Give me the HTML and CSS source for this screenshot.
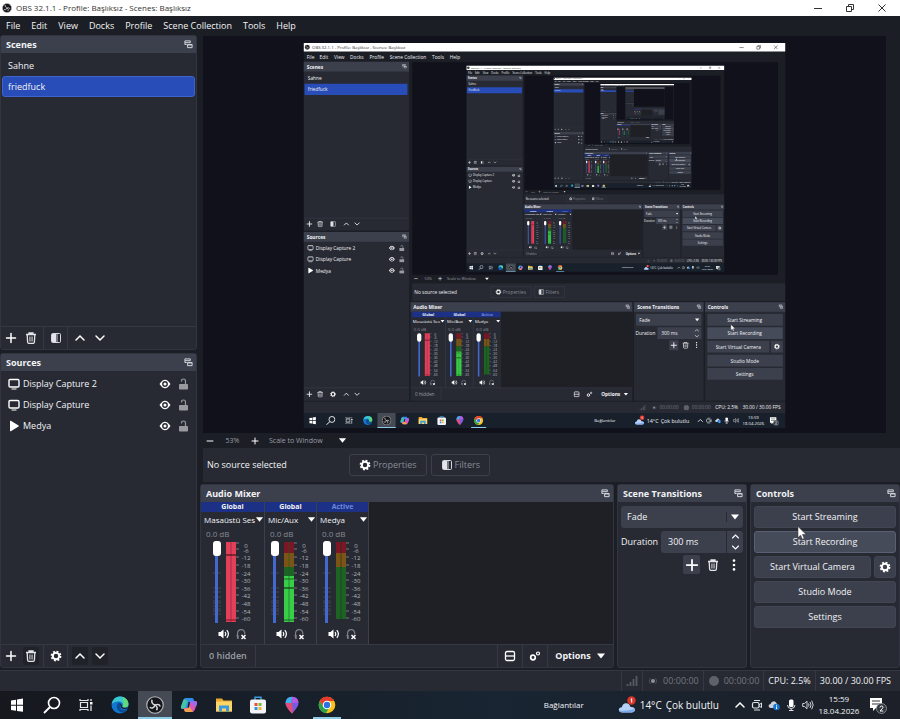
FILE: index.html
```html
<!DOCTYPE html>
<html lang="tr">
  <head>
    <meta charset="UTF-8" />
    <meta name="viewport" content="width=device-width, initial-scale=1.0" />
    <title>OBS 32.1.1</title>
    <link rel="stylesheet" href="styles.css">
  </head>
  <body>
    <!-- icons -->
    <svg class="sprite" aria-hidden="true">
      <symbol id="i-obs" viewBox="0 0 24 24"><circle cx="12" cy="12" r="11" fill="#16171b" stroke="#b9bbc0" stroke-width="1.5"/><g fill="none" stroke="#d4d6da" stroke-width="2"><path d="M8 5c-1 4 1 6 4 7 3-1 6-1 7 2"/><path d="M12 12c-1 4-4 5-7 3"/><path d="M12 12c3 2 4 4 2 7"/></g></symbol>
      <symbol id="i-float" viewBox="0 0 10 10"><path d="M1 1h6v2H1zM1 3v2h2M4 5h5v3.500H4zM4 5.500h5" fill="none" stroke="#d5d7dd" stroke-width="1.100"/></symbol>
      <symbol id="i-plus" viewBox="0 0 12 12"><path d="M6 1.500v9M1.500 6h9" stroke="#fff" stroke-width="1.500" stroke-linecap="round"/></symbol>
      <symbol id="i-minus" viewBox="0 0 12 12"><path d="M1 6h10" stroke="#d5d7dd" stroke-width="1.800"/></symbol>
      <symbol id="i-trash" viewBox="0 0 12 12"><path d="M1 2.500h10M4 2.200V1h4v1.200M2.200 2.700l.4 7.300q.1 1.300 1.200 1.300h4.400q1.100 0 1.200-1.300l.4-7.300" fill="none" stroke="#e4e5e9" stroke-width="1.300"/><path d="M4.700 4.500v5M6 4.500v5M7.300 4.500v5" stroke="#e4e5e9" stroke-width=".7"/></symbol>
      <symbol id="i-filter" viewBox="0 0 12 12"><rect x="1.500" y="1.500" width="9" height="9" rx="1" fill="none" stroke="#d5d7dd" stroke-width="1"/><path d="M2 2h4v8H2z" fill="#e4e5e9"/><path d="M6 2h2v8H6z" fill="#777b86"/></symbol>
      <symbol id="i-up" viewBox="0 0 12 12"><path d="M2 8l4-4 4 4" fill="none" stroke="#fff" stroke-width="1.500" stroke-linecap="round"/></symbol>
      <symbol id="i-down" viewBox="0 0 12 12"><path d="M2 4l4 4 4-4" fill="none" stroke="#fff" stroke-width="1.500" stroke-linecap="round"/></symbol>
      <symbol id="i-arrow" viewBox="0 0 10 10"><path d="M1 2.500h8L5 7.500z" fill="#fff"/></symbol>
      <symbol id="i-gear" viewBox="0 0 12 12"><circle cx="6" cy="6" r="3.200" fill="none" stroke="#fff" stroke-width="2"/><circle cx="6" cy="6" r="4.600" fill="none" stroke="#fff" stroke-width="1.600" stroke-dasharray="1.900 1.713"/></symbol>
      <symbol id="i-gears" viewBox="0 0 12 12"><circle cx="4" cy="7.500" r="2.300" fill="none" stroke="#fff" stroke-width="1.700"/><circle cx="9" cy="3.500" r="1.500" fill="none" stroke="#fff" stroke-width="1.200"/></symbol>
      <symbol id="i-layout" viewBox="0 0 12 12"><rect x="1.500" y="1.500" width="9" height="9" rx="1.500" fill="none" stroke="#fff" stroke-width="1.300"/><path d="M1.500 6h9" stroke="#fff" stroke-width="1.300"/></symbol>
      <symbol id="i-dots" viewBox="0 0 12 12"><g fill="#fff"><circle cx="6" cy="1.600" r="1.300"/><circle cx="6" cy="6" r="1.300"/><circle cx="6" cy="10.400" r="1.300"/></g></symbol>
      <symbol id="i-monitor" viewBox="0 0 12 12"><rect x="1" y="1.500" width="10" height="7.500" rx="1.200" fill="none" stroke="#fff" stroke-width="1.400"/><path d="M3.500 11h5" stroke="#fff" stroke-width="1"/></symbol>
      <symbol id="i-play" viewBox="0 0 12 12"><path d="M2 1.200q0-.8.800-.4l7.800 4.700q.6.500 0 1l-7.800 4.700q-.8.300-.8-.4z" fill="#fff"/></symbol>
      <symbol id="i-eye" viewBox="0 0 12 12"><path d="M.5 6Q6-2.500 11.500 6 6 14.500.5 6z" fill="#fff"/><circle cx="6" cy="6" r="2.900" fill="#272a33"/><circle cx="6" cy="6" r="1.500" fill="#fff"/></symbol>
      <symbol id="i-lock" viewBox="0 0 12 12"><rect x="2" y="6" width="9" height="5.500" rx=".8" fill="#989a9f"/><path d="M4.500 3.500V3q0-2 2-2t2 2v3" fill="none" stroke="#989a9f" stroke-width="1.200"/></symbol>
      <symbol id="i-speaker" viewBox="0 0 12 12"><path d="M.5 4h2l3-2.500v9L2.500 8h-2z" fill="#fff"/><path d="M7 4q1.500 2 0 4M8.800 2.200q3.200 3.800 0 7.600" fill="none" stroke="#fff" stroke-width="1.200"/></symbol>
      <symbol id="i-phones" viewBox="0 0 12 12"><path d="M2.500 10.500V6q0-4.300 3.700-4.300T9.800 6" fill="none" stroke="#7e8188" stroke-width="1.200"/><path d="M1.500 7h2.200v4H2.500z" fill="#7e8188"/><path d="M6.500 7l4 4M10.500 7l-4 4" stroke="#fff" stroke-width="1.500"/></symbol>
      <symbol id="i-signal" viewBox="0 0 12 12"><path d="M1.500 11V9M4.500 11V7M7.500 11V4M10.500 11V1" stroke="#575a63" stroke-width="1.800"/></symbol>
      <symbol id="i-live" viewBox="0 0 12 12"><circle cx="6" cy="6" r="2" fill="#8d9098"/><path d="M3.500 3q-2.500 3 0 6M8.500 3q2.500 3 0 6" fill="none" stroke="#4a4d56"/></symbol>
      <symbol id="i-rec" viewBox="0 0 12 12"><circle cx="6" cy="6" r="5" fill="#5f6168"/></symbol>
      <symbol id="i-min" viewBox="0 0 10 10"><path d="M1 5.500h8" stroke="#333"/></symbol>
      <symbol id="i-max" viewBox="0 0 10 10"><path d="M1.500 3.500h5v5h-5zM3.500 3V1.500h5v5H7" fill="none" stroke="#333"/></symbol>
      <symbol id="i-close" viewBox="0 0 10 10"><path d="M1.500 1.500l7 7M8.500 1.500l-7 7" stroke="#333"/></symbol>
      <symbol id="i-cursor" viewBox="0 0 10 14"><path d="M1 .5v11l2.600-2.300 1.800 4 1.800-.8-1.800-3.900H9z" fill="#fff" stroke="#333" stroke-width=".5"/></symbol>

      <!-- taskbar icons -->
      <symbol id="t-win" viewBox="0 0 18 18"><path d="M3 4.500l5-.8v5H3zM9 3.500l6-.9v6.100H9zM3 9.700h5v5l-5-.8zM9 9.700h6v6.100l-6-.9z" fill="#fff"/></symbol>
      <symbol id="t-search" viewBox="0 0 18 18"><circle cx="11" cy="7" r="5.500" fill="none" stroke="#fff" stroke-width="1.600"/><path d="M7 11l-6 6" stroke="#fff" stroke-width="1.800"/></symbol>
      <symbol id="t-view" viewBox="0 0 18 18"><path d="M3.500 6.500h7v5h-7zM3 3v1.500h8V3M3 15v-1.500h8V15" fill="none" stroke="#e4e5e9" stroke-width="1.200"/><path d="M14 3v2M14 9.500V15" stroke="#e4e5e9" stroke-width="1.300"/><path d="M13 6h2.500v2.500H13z" fill="#fff"/></symbol>
      <symbol id="t-edge" viewBox="0 0 18 18"><circle cx="9" cy="9" r="8.500" fill="#1377cf"/><path d="M.8 8C2-2.500 17-1.500 17.400 8c.1 3-3 4.200-6 3.200 1.600-4-1-5.700-4-5.600C4 5.700 2 6.500.8 8z" fill="#3bc7cf"/><path d="M12 1.200c4 1.500 5.400 4 5.400 6.800 0 3-3 4.200-6 3.200 2-4 .6-7 .6-10z" fill="#62d879"/><path d="M7 7c-3 4-.5 9 5 9.800 2-.5 4-2.300 4.500-3.800-4 2-7.500.4-7.500-2.500 0-1 1-1.500 1-2.500S8 6.500 7 7z" fill="#0d4d97"/><path d="M9.300 8.500q1.700.8.900 2.300 2 2.700 6.700 1" fill="none" stroke="#171c26" stroke-width="1.200"/></symbol>
      <symbol id="t-copilot" viewBox="0 0 18 18"><path d="M6 2h6q1.300 0 1.600 1.300L14.500 6H9.800L7.500 13H3q-2.500 0-2-2.500L3.300 4Q4 2 6 2z" fill="#2f8fe8"/><path d="M3.300 4L1 10.500Q.5 13 3 13h2L7.500 5q-3-3-4.200-1z" fill="#46c3a0"/><path d="M12 16H6q-1.300 0-1.600-1.300L3.500 12h4.700l2.300-7H15q2.500 0 2 2.500L14.700 14Q14 16 12 16z" fill="#d958b5"/><path d="M4 13l4.200-1L9 10l4 6H6q-1.300 0-2-3z" fill="#f3a24b"/><path d="M10.500 5H15q2.500 0 2 2.500L16 11l-6-4z" fill="#9a6bea"/><path d="M8.500 6h1.300L9 11.500H7.500z" fill="#171c26"/></symbol>
      <symbol id="t-folder" viewBox="0 0 18 18"><path d="M1 2.500h6l1.500 2H17v11H1z" fill="#e9a92f"/><path d="M1 5.500h16v10H1z" fill="#fdd567"/><path d="M4 9.500h10v6h-3v-3H7v3H4z" fill="#3a9ade"/></symbol>
      <symbol id="t-store" viewBox="0 0 18 18"><path d="M6 4V1.200h6V4" fill="none" stroke="#3a9ade" stroke-width="1.500"/><rect x="1" y="3.500" width="16" height="14" rx="2" fill="#f3f4f7"/><path d="M5.500 7H8.500v3H5.500z" fill="#e9533b"/><path d="M9.500 7h3v3h-3z" fill="#7cba3b"/><path d="M5.500 11h3v3h-3z" fill="#2f94de"/><path d="M9.500 11h3v3h-3z" fill="#f2b52c"/></symbol>
      <symbol id="t-paint" viewBox="0 0 18 18"><path d="M9 17.500Q2 10.500 2.500 6.500 3 1 9 .7q6 .3 6.500 5.800Q16 10.500 9 17.500z" fill="#7a5be0"/><path d="M2.500 7Q3 1 9 .7L8 8z" fill="#38b6ea"/><path d="M9 .7q6 .3 6.500 5.800L9 7z" fill="#b45be0"/><path d="M2.500 7L9 7l1 9.500-1 1Q3 11.500 2.500 7z" fill="#e04d75"/></symbol>
      <symbol id="t-chrome" viewBox="0 0 18 18"><circle cx="9" cy="9" r="8.300" fill="#fbc116"/><path d="M1.800 4.800a8.300 8.300 0 0 0 6.200 12.400l3.600-6.200H5.400z" fill="#2da24c"/><path d="M1.800 4.800A8.300 8.300 0 0 1 16.200 4.900H9L5.400 11z" fill="#e33b2e"/><circle cx="9" cy="9" r="4.300" fill="#fff"/><circle cx="9" cy="9" r="3.200" fill="#2b73e2"/></symbol>
      <symbol id="t-weather" viewBox="0 0 18 18"><path d="M4.500 16.500q-3.500 0-3.700-2.700.2-2.500 3-2.600 1-4.200 4.500-4 3.200.2 4.200 3.700 4.500-.2 4.500 2.900-.2 2.700-3.500 2.700z" fill="#b6d1f7"/><path d="M1 14.500q7 1 15.500-1.500.3 3.500-3.500 3.500H4.500Q1.500 16.500 1 14.500z" fill="#7ca8ec"/><circle cx="13.500" cy="4.500" r="4.200" fill="#d9362b"/><path d="M12.700 3.500l1-.8v4" fill="none" stroke="#fff"/></symbol>
      <symbol id="t-meet" viewBox="0 0 12 12"><rect x="1.500" y="3.500" width="6.500" height="5.500" rx="1.500" fill="none" stroke="#dfe1e5" stroke-width="1.200"/><path d="M8 6l2.500-2v4.500L8 7M3 1.500h6M3 11h6" fill="none" stroke="#dfe1e5"/></symbol>
      <symbol id="t-cloud" viewBox="0 0 12 12"><path d="M2.500 9Q.3 8.500.6 6.500 1 5 2.500 5 3.500 2 6 2.200 8 2.500 8.700 4.500L10 6l-4 3z" fill="#cdd1d8"/><circle cx="8.500" cy="8" r="3.300" fill="#1673d1"/><path d="M8.500 7.500V10M8.500 5.800v1" stroke="#fff"/></symbol>
      <symbol id="t-mic" viewBox="0 0 12 12"><rect x="4" y=".5" width="4.500" height="7.500" rx="1.500" fill="#fff"/><path d="M2.500 6q0 3.500 3.700 3.500T10 6M6.200 9.500v2M4 11.500h4.500" fill="none" stroke="#dfe1e5"/></symbol>
      <symbol id="t-vol" viewBox="0 0 12 12"><path d="M.7 4.500h1.800L5 2.200v7.600L2.500 7.500H.7zM6.500 4.500q1 1.500 0 3M8 3q2 3 0 6M9.700 1.700q3 4.300 0 8.600" fill="none" stroke="#dfe1e5" stroke-width=".9"/></symbol>
      <symbol id="t-note" viewBox="0 0 18 18"><path d="M1 2h12v10H7l-3 3v-3H1z" fill="#fff"/><path d="M3 5h8M3 8h8" stroke="#30343d"/><circle cx="12.500" cy="12.500" r="5" fill="#30343d" stroke="#9a9da4" stroke-width=".8"/><path d="M11 11.500q0-1.500 1.500-1.500t1.500 1.300q0 .8-3 3.700h3.300" fill="none" stroke="#fff"/></symbol>

      <!-- level meters -->
      <symbol id="m-scale" viewBox="0 0 28 82">
        <path d="M10 2h3M10 8h3M10 16h3M10 24h3M10 32h3M10 39h3M10 47h3M10 54h3M10 62h3M10 70h3M10 77h3" stroke="#767982"/>
        <g class="scale-text"><text x="20" y="7">0</text><text x="20" y="12">-6</text><text x="20" y="19">-12</text><text x="20" y="27">-18</text><text x="20" y="35">-24</text><text x="20" y="42">-30</text><text x="20" y="50">-36</text><text x="20" y="57">-42</text><text x="20" y="65">-48</text><text x="20" y="73">-54</text><text x="20" y="80">-60</text></g>
      </symbol>
      <symbol id="m-clip" viewBox="0 0 28 82"><path d="M0 1h10v80H0z" fill="#e2405a"/><path d="M5 1v80" stroke="#a82c42"/><path d="M0 14h10" stroke="#25070c"/><path d="M0 79h10" stroke="#7d1524"/><use href="#m-scale"/></symbol>
      <symbol id="m-live" viewBox="0 0 28 82"><path d="M0 1h10v11H0z" fill="#7d1524"/><path d="M0 12h10v14H0z" fill="#7c5416"/><path d="M0 26h10v9H0z" fill="#1d6424"/><path d="M0 35h10v46H0z" fill="#38cf48"/><path d="M5 1v80" stroke="#1c5a26" stroke-opacity=".6"/><path d="M0 38h10M0 79h10" stroke="#1d6424"/><path d="M0 47h10" stroke="#08180a"/><use href="#m-scale"/></symbol>
      <symbol id="m-idle" viewBox="0 0 28 82"><path d="M0 1h10v11H0z" fill="#7d1524"/><path d="M0 12h10v14H0z" fill="#7c5416"/><path d="M0 26h10v52H0z" fill="#1d6424"/><path d="M5 1v77" stroke="#15331a" stroke-opacity=".6"/><use href="#m-scale"/></symbol>
      <symbol id="m-ticks" viewBox="0 0 10 82"><path d="M1 32h8M1 47h8M1 51h8M1 56h8M1 60h8M1 62h8M1 65h8M1 68h8M1 70h8M1 73h8" stroke="#51545e" stroke-width=".7"/></symbol>

      <!-- one captured desktop, repeated inside itself -->
      <symbol id="desk" viewBox="0 0 900 719">
        <path d="M0 0h900v719H0z" fill="#1c1e25"/>
        <path d="M0 0h900v16H0z" fill="#fff"/>
        <use href="#i-obs" x="2" y="3" width="10" height="10"/>
        <text x="16" y="11" font-size="8" fill="#333">OBS 32.1.1 - Profile: Başlıksız - Scenes: Başlıksız</text>
        <use href="#i-min" x="813" y="3" width="10" height="10"/><use href="#i-max" x="845" y="3" width="10" height="10"/><use href="#i-close" x="877" y="3" width="10" height="10"/>
        <text x="6" y="29">File</text><text x="30" y="29">Edit</text><text x="57" y="29">View</text><text x="87" y="29">Docks</text><text x="123" y="29">Profile</text><text x="161" y="29">Scene Collection</text><text x="240" y="29">Tools</text><text x="273" y="29">Help</text>
        <path d="M0 35h197v315H0zM0 353h197v315H0zM203 449h697v33H203zM200 484h414v184H200zM617 484h130v184H617zM750 484h150v184H750zM0 670h900v21H0z" fill="#272a33"/>
        <path d="M0 35h197v18H0zM0 353h197v18H0zM200 484h414v18H200zM617 484h130v18H617zM750 484h150v18H750z" fill="#3c404d"/>
        <path d="M203 36h683v397H203z" fill="#10111a"/>
        <path d="M369 502h244v142H369z" fill="#1f2026"/>
        <path d="M0 327h197M0 644h197M200 644h414M265 502v142M317 502v142M257 644v23" stroke="#3c404d"/>
        <path d="M2 76h192v21H2z" fill="#284cb8"/>
        <g font-weight="700"><text x="6" y="48">Scenes</text><text x="6" y="366">Sources</text><text x="205" y="496">Audio Mixer</text><text x="623" y="496">Scene Transitions</text><text x="755" y="496">Controls</text></g>
        <use href="#i-float" x="184" y="39" width="9" height="9"/><use href="#i-float" x="184" y="357" width="9" height="9"/><use href="#i-float" x="601" y="488" width="9" height="9"/><use href="#i-float" x="734" y="488" width="9" height="9"/><use href="#i-float" x="887" y="488" width="9" height="9"/>
        <text x="8" y="69">Sahne</text><text x="8" y="90">friedfuck</text>
        <use href="#i-plus" x="5" y="332" width="12" height="12"/><use href="#i-trash" x="25" y="332" width="12" height="12"/><use href="#i-filter" x="49" y="332" width="12" height="12"/><use href="#i-up" x="74" y="332" width="12" height="12"/><use href="#i-down" x="94" y="332" width="12" height="12"/>
        <use href="#i-plus" x="5" y="650" width="12" height="12"/><use href="#i-trash" x="25" y="650" width="12" height="12"/><use href="#i-gear" x="49" y="650" width="12" height="12"/><use href="#i-up" x="74" y="650" width="12" height="12"/><use href="#i-down" x="94" y="650" width="12" height="12"/>
        <use href="#i-monitor" x="7" y="377" width="12" height="12"/><use href="#i-monitor" x="7" y="398" width="12" height="12"/><use href="#i-play" x="7" y="419" width="12" height="12"/>
        <text x="23" y="387">Display Capture 2</text><text x="23" y="408">Display Capture</text><text x="23" y="429">Medya</text>
        <use href="#i-eye" x="159" y="377" width="12" height="12"/><use href="#i-eye" x="159" y="398" width="12" height="12"/><use href="#i-eye" x="159" y="419" width="12" height="12"/>
        <use href="#i-lock" x="177" y="377" width="12" height="12"/><use href="#i-lock" x="177" y="398" width="12" height="12"/><use href="#i-lock" x="177" y="419" width="12" height="12"/>
        <use href="#i-minus" x="206" y="436" width="8" height="8"/><use href="#i-plus" x="251" y="436" width="8" height="8"/>
        <g font-size="7" fill="#9a9da5"><text x="226" y="443">53%</text><text x="268" y="443">Scale to Window</text></g>
        <use href="#i-arrow" x="338" y="436" width="9" height="9"/>
        <text x="207" y="469">No source selected</text>
        <path d="M350 455h75v20h-75zM431 455h56v20h-56z" fill="none" stroke="#3c404d"/>
        <use href="#i-gear" x="358" y="459" width="12" height="12"/><use href="#i-filter" x="438" y="459" width="12" height="12"/>
        <g fill="#888b94"><text x="372" y="469">Properties</text><text x="452" y="469">Filters</text></g>
        <path d="M202 502h166v10H202z" fill="#1c3185"/>
        <g font-size="7" font-weight="700" text-anchor="middle"><text x="233" y="510">Global</text><text x="291" y="510">Global</text><text x="343" y="510" fill="#6d88dd">Active</text></g>
        <g font-size="8"><text x="204" y="523">Masaüstü Ses</text><text x="268" y="523">Mic/Aux</text><text x="320" y="523">Medya</text></g>
        <use href="#i-arrow" x="255" y="515" width="9" height="9"/><use href="#i-arrow" x="307" y="515" width="9" height="9"/><use href="#i-arrow" x="359" y="515" width="9" height="9"/>
        <g font-size="8" fill="#888b94"><text x="206" y="537">0.0 dB</text><text x="270" y="537">0.0 dB</text><text x="322" y="537">0.0 dB</text></g>
        <path d="M216 545v78M275 545v78M327 545v78" stroke="#4269cf" stroke-width="3"/>
        <path d="M216 546v8M275 546v8M327 546v8" stroke="#fff" stroke-width="8" stroke-linecap="round"/>
        <use href="#m-clip" x="226" y="541" width="28" height="82"/><use href="#m-live" x="285" y="541" width="28" height="82"/><use href="#m-idle" x="337" y="541" width="28" height="82"/>
        <use href="#i-speaker" x="218" y="628" width="12" height="12"/><use href="#i-phones" x="235" y="628" width="12" height="12"/><use href="#i-speaker" x="276" y="628" width="12" height="12"/><use href="#i-phones" x="293" y="628" width="12" height="12"/><use href="#i-speaker" x="328" y="628" width="12" height="12"/><use href="#i-phones" x="345" y="628" width="12" height="12"/>
        <text x="208" y="660" fill="#9a9da5">0 hidden</text>
        <use href="#i-layout" x="504" y="650" width="12" height="12"/><use href="#i-gears" x="528" y="650" width="12" height="12"/><text x="556" y="660" font-weight="700">Options</text><use href="#i-arrow" x="597" y="651" width="10" height="10"/>
        <path d="M621 506h122v22H621zM661 531h82v22h-82zM683 555h17v19h-17zM754 506h141v22H754zM754 556h116v22H754zM873 556h22v22h-22zM754 582h141v22H754zM754 607h141v22H754z" fill="#3c404d"/>
        <path d="M754 531h141v22H754z" fill="#464b5a"/>
        <text x="627" y="521">Fade</text><text x="620" y="546">Duration</text><text x="668" y="546">300 ms</text>
        <use href="#i-arrow" x="730" y="512" width="10" height="10"/><use href="#i-up" x="730" y="532" width="9" height="9"/><use href="#i-down" x="730" y="543" width="9" height="9"/>
        <use href="#i-plus" x="685" y="558" width="13" height="13"/><use href="#i-trash" x="707" y="558" width="13" height="13"/><use href="#i-dots" x="728" y="558" width="12" height="12"/>
        <g text-anchor="middle"><text x="824" y="521">Start Streaming</text><text x="824" y="546">Start Recording</text><text x="812" y="571">Start Virtual Camera</text><text x="824" y="597">Studio Mode</text><text x="824" y="622">Settings</text></g>
        <use href="#i-gear" x="878" y="561" width="12" height="12"/><use href="#i-cursor" x="797" y="525" width="10" height="14"/>
        <use href="#i-signal" x="627" y="675" width="12" height="12"/><use href="#i-live" x="649" y="675" width="12" height="12"/><use href="#i-rec" x="709" y="675" width="12" height="12"/>
        <text x="665" y="684" fill="#74777f">00:00:00</text><text x="725" y="684" fill="#74777f">00:00:00</text><text x="769" y="684">CPU: 2.5%</text><text x="820" y="684">30.00 / 30.00 FPS</text>
        <path d="M0 691h900v28H0z" fill="#18202b"/>
        <path d="M138 691h34v28h-34z" fill="#464a54"/><path d="M138 717h34v2h-34zM313 717h28v2h-28z" fill="#8ccbe8"/>
        <use href="#t-win" x="8" y="696" width="18" height="18"/><use href="#t-search" x="42" y="696" width="18" height="18"/><use href="#t-view" x="76" y="696" width="18" height="18"/><use href="#t-edge" x="111" y="696" width="18" height="18"/><use href="#i-obs" x="146" y="696" width="18" height="18"/><use href="#t-copilot" x="180" y="696" width="18" height="18"/><use href="#t-folder" x="214" y="696" width="18" height="18"/><use href="#t-store" x="249" y="696" width="18" height="18"/><use href="#t-paint" x="283" y="696" width="18" height="18"/><use href="#t-chrome" x="318" y="696" width="18" height="18"/>
        <text x="543" y="708" font-size="8">Bağlantılar</text>
        <use href="#t-weather" x="618" y="695" width="19" height="19"/><g font-size="10"><text x="641" y="709">14°C</text><text x="667" y="709">Çok bulutlu</text></g>
        <use href="#i-up" x="735" y="699" width="12" height="12"/><use href="#t-meet" x="751" y="699" width="12" height="12"/><use href="#t-cloud" x="768" y="699" width="12" height="12"/><use href="#t-mic" x="784" y="699" width="12" height="12"/><use href="#t-vol" x="802" y="699" width="12" height="12"/>
        <g font-size="8" text-anchor="middle"><text x="840" y="702">13:59</text><text x="840" y="714">18.04.2026</text></g>
        <use href="#t-note" x="870" y="697" width="18" height="18"/>
      </symbol>
      <symbol id="desk5" viewBox="0 0 900 719"><use href="#desk" width="900" height="719"/></symbol>
      <symbol id="desk4" viewBox="0 0 900 719"><use href="#desk" width="900" height="719"/><use href="#desk5" x="304" y="42" width="482" height="385"/></symbol>
      <symbol id="desk3" viewBox="0 0 900 719"><use href="#desk" width="900" height="719"/><use href="#desk4" x="304" y="42" width="482" height="385"/></symbol>
      <symbol id="desk2" viewBox="0 0 900 719"><use href="#desk" width="900" height="719"/><use href="#desk3" x="304" y="42" width="482" height="385"/></symbol>
    </svg>

    <header class="titlebar">
      <svg class="logo"><use href="#i-obs"/></svg>
      <span class="title">OBS 32.1.1 - Profile: Başlıksız - Scenes: Başlıksız</span>
      <button aria-label="Minimize"><svg class="i10"><use href="#i-min"/></svg></button>
      <button aria-label="Restore"><svg class="i10"><use href="#i-max"/></svg></button>
      <button aria-label="Close"><svg class="i10"><use href="#i-close"/></svg></button>
    </header>
    <nav class="menubar">
      <button>File</button><button>Edit</button><button>View</button><button>Docks</button><button>Profile</button><button>Scene Collection</button><button>Tools</button><button>Help</button>
    </nav>

    <main class="workspace">
      <aside class="left">
        <section class="dock">
          <h2>Scenes <button aria-label="Float"><svg class="i9"><use href="#i-float"/></svg></button></h2>
          <ul class="list">
            <li>Sahne</li>
            <li class="selected">friedfuck</li>
          </ul>
          <div class="toolbar">
            <button aria-label="Add scene"><svg class="i12"><use href="#i-plus"/></svg></button>
            <button aria-label="Remove scene"><svg class="i12"><use href="#i-trash"/></svg></button>
            <button class="mid" aria-label="Scene filters"><svg class="i12"><use href="#i-filter"/></svg></button>
            <button aria-label="Move up"><svg class="i12"><use href="#i-up"/></svg></button>
            <button aria-label="Move down"><svg class="i12"><use href="#i-down"/></svg></button>
          </div>
        </section>
        <section class="dock">
          <h2>Sources <button aria-label="Float"><svg class="i9"><use href="#i-float"/></svg></button></h2>
          <ul class="list">
            <li><svg class="i12"><use href="#i-monitor"/></svg><span>Display Capture 2</span><button aria-label="Visible"><svg class="i12"><use href="#i-eye"/></svg></button><button aria-label="Lock"><svg class="i12"><use href="#i-lock"/></svg></button></li>
            <li><svg class="i12"><use href="#i-monitor"/></svg><span>Display Capture</span><button aria-label="Visible"><svg class="i12"><use href="#i-eye"/></svg></button><button aria-label="Lock"><svg class="i12"><use href="#i-lock"/></svg></button></li>
            <li><svg class="i12"><use href="#i-play"/></svg><span>Medya</span><button aria-label="Visible"><svg class="i12"><use href="#i-eye"/></svg></button><button aria-label="Lock"><svg class="i12"><use href="#i-lock"/></svg></button></li>
          </ul>
          <div class="toolbar">
            <button aria-label="Add source"><svg class="i12"><use href="#i-plus"/></svg></button>
            <button class="dark" aria-label="Remove source"><svg class="i12"><use href="#i-trash"/></svg></button>
            <button class="mid" aria-label="Source properties"><svg class="i12"><use href="#i-gear"/></svg></button>
            <button class="dark" aria-label="Move up"><svg class="i12"><use href="#i-up"/></svg></button>
            <button class="dark" aria-label="Move down"><svg class="i12"><use href="#i-down"/></svg></button>
          </div>
        </section>
      </aside>

      <div class="center">
        <div class="preview">
          <svg class="shot" viewBox="0 0 900 719" role="img" aria-label="Display Capture 2">
            <use href="#desk" width="900" height="719"/>
            <use href="#desk2" x="304" y="42" width="482" height="385"/>
          </svg>
        </div>
        <div class="zoombar">
          <button aria-label="Zoom out"><svg class="i8"><use href="#i-minus"/></svg></button>
          <span>53%</span>
          <button aria-label="Zoom in"><svg class="i8"><use href="#i-plus"/></svg></button>
          <div class="pick">
            <select aria-label="Preview scaling"><option>Scale to Window</option></select>
            <svg class="i9"><use href="#i-arrow"/></svg>
          </div>
        </div>
        <div class="context">
          <span>No source selected</span>
          <button><svg class="i12"><use href="#i-gear"/></svg>Properties</button>
          <button><svg class="i12"><use href="#i-filter"/></svg>Filters</button>
        </div>

        <div class="docks">
          <section class="dock mixer">
            <h2>Audio Mixer <button aria-label="Float"><svg class="i9"><use href="#i-float"/></svg></button></h2>
            <div class="channels">
              <div class="channel wide">
                <b>Global</b>
                <button class="name">Masaüstü Ses<svg class="i9"><use href="#i-arrow"/></svg></button>
                <span class="db">0.0 dB</span>
                <div class="levels">
                  <div class="fader"><svg><use href="#m-ticks"/></svg><input type="range" aria-label="Masaüstü Ses" value="100"></div>
                  <svg class="meter"><use href="#m-clip"/></svg>
                </div>
                <div class="mute"><button aria-label="Mute"><svg class="i12"><use href="#i-speaker"/></svg></button><button aria-label="Monitor"><svg class="i12"><use href="#i-phones"/></svg></button></div>
              </div>
              <div class="channel">
                <b>Global</b>
                <button class="name">Mic/Aux<svg class="i9"><use href="#i-arrow"/></svg></button>
                <span class="db">0.0 dB</span>
                <div class="levels">
                  <div class="fader"><svg><use href="#m-ticks"/></svg><input type="range" aria-label="Mic/Aux" value="100"></div>
                  <svg class="meter"><use href="#m-live"/></svg>
                </div>
                <div class="mute"><button aria-label="Mute"><svg class="i12"><use href="#i-speaker"/></svg></button><button aria-label="Monitor"><svg class="i12"><use href="#i-phones"/></svg></button></div>
              </div>
              <div class="channel active">
                <b>Active</b>
                <button class="name">Medya<svg class="i9"><use href="#i-arrow"/></svg></button>
                <span class="db">0.0 dB</span>
                <div class="levels">
                  <div class="fader"><svg><use href="#m-ticks"/></svg><input type="range" aria-label="Medya" value="100"></div>
                  <svg class="meter"><use href="#m-idle"/></svg>
                </div>
                <div class="mute"><button aria-label="Mute"><svg class="i12"><use href="#i-speaker"/></svg></button><button aria-label="Monitor"><svg class="i12"><use href="#i-phones"/></svg></button></div>
              </div>
            </div>
            <div class="toolbar">
              <button class="hidden-count">0 hidden</button>
              <button class="sep" aria-label="Layout"><svg class="i12"><use href="#i-layout"/></svg></button>
              <button class="sep" aria-label="Advanced audio"><svg class="i12"><use href="#i-gears"/></svg></button>
              <button class="sep options">Options<svg class="i10"><use href="#i-arrow"/></svg></button>
            </div>
          </section>

          <section class="dock transitions">
            <h2>Scene Transitions <button aria-label="Float"><svg class="i9"><use href="#i-float"/></svg></button></h2>
            <div class="pick">
              <select aria-label="Transition"><option>Fade</option></select>
              <svg class="i10"><use href="#i-arrow"/></svg>
            </div>
            <div class="duration">
              <label for="duration">Duration</label>
              <div class="spin">
                <input id="duration" type="text" value="300 ms">
                <div class="steps"><button aria-label="Increase"><svg class="i9"><use href="#i-up"/></svg></button><button aria-label="Decrease"><svg class="i9"><use href="#i-down"/></svg></button></div>
              </div>
            </div>
            <div class="actions">
              <button class="filled" aria-label="Add transition"><svg class="i14"><use href="#i-plus"/></svg></button>
              <button aria-label="Remove transition"><svg class="i12"><use href="#i-trash"/></svg></button>
              <button aria-label="Transition menu"><svg class="i12"><use href="#i-dots"/></svg></button>
            </div>
          </section>

          <section class="dock controls">
            <h2>Controls <button aria-label="Float"><svg class="i9"><use href="#i-float"/></svg></button></h2>
            <div class="stack">
              <button>Start Streaming</button>
              <button class="hover">Start Recording<svg class="cursor"><use href="#i-cursor"/></svg></button>
              <div class="row"><button>Start Virtual Camera</button><button class="square" aria-label="Virtual camera settings"><svg class="i12"><use href="#i-gear"/></svg></button></div>
              <button>Studio Mode</button>
              <button>Settings</button>
            </div>
          </section>
        </div>
      </div>
    </main>

    <footer class="status">
      <span><svg class="i12"><use href="#i-signal"/></svg></span>
      <span class="dim"><svg class="i12"><use href="#i-live"/></svg>00:00:00</span>
      <span class="dim"><svg class="i12"><use href="#i-rec"/></svg>00:00:00</span>
      <span>CPU: 2.5%</span>
      <span class="fps">30.00 / 30.00 FPS</span>
    </footer>

    <div class="taskbar">
      <div class="apps">
        <button aria-label="Start"><svg><use href="#t-win"/></svg></button>
        <button aria-label="Search"><svg><use href="#t-search"/></svg></button>
        <button aria-label="Task view"><svg><use href="#t-view"/></svg></button>
        <button aria-label="Edge"><svg><use href="#t-edge"/></svg></button>
        <button class="current" aria-label="OBS"><svg><use href="#i-obs"/></svg></button>
        <button aria-label="Copilot"><svg><use href="#t-copilot"/></svg></button>
        <button aria-label="Files"><svg><use href="#t-folder"/></svg></button>
        <button aria-label="Store"><svg><use href="#t-store"/></svg></button>
        <button aria-label="Paint"><svg><use href="#t-paint"/></svg></button>
        <button class="open" aria-label="Chrome"><svg><use href="#t-chrome"/></svg></button>
      </div>
      <span class="links">Bağlantılar</span>
      <button class="weather"><svg><use href="#t-weather"/></svg><span>14°C</span><span>Çok bulutlu</span></button>
      <div class="tray">
        <svg class="i12"><use href="#i-up"/></svg>
        <svg class="i12"><use href="#t-meet"/></svg>
        <svg class="i12"><use href="#t-cloud"/></svg>
        <svg class="i12"><use href="#t-mic"/></svg>
        <svg class="i12"><use href="#t-vol"/></svg>
      </div>
      <div class="clock"><span>15:59</span><span>18.04.2026</span></div>
      <button class="note" aria-label="Notifications"><svg><use href="#t-note"/></svg></button>
    </div>
  </body>
</html>
```

FILE: styles.css
```css
* {
  margin: 0;
  padding: 0;
  box-sizing: border-box;
}
body {
  display: flex;
  flex-direction: column;
  min-height: 100vh;
  background-color: #1c1e25;
  color: #f2f3f5;
  font: 9px/14px "Open Sans", "Noto Sans", sans-serif;
}
button,
input,
select {
  border: none;
  background: none;
  color: inherit;
  font: inherit;
}
button {
  display: flex;
  align-items: center;
  justify-content: center;
  white-space: nowrap;
}
svg {
  display: block;
  flex: none;
}
.sprite {
  display: none;
}
/* icon sizes */
.i8 { width: 8px; height: 8px; }
.i9 { width: 9px; height: 9px; }
.i10 { width: 10px; height: 10px; }
.i12 { width: 12px; height: 12px; }
.i14 { width: 14px; height: 14px; }

/* title and menu */
.titlebar {
  display: flex;
  align-items: center;
  height: 16px;
  padding-left: 2px;
  background-color: #fff;
  color: #333;
  font-size: 8px;
}
.logo {
  width: 10px;
  height: 10px;
  margin-right: 4px;
}
.title {
  flex: 1;
}
.titlebar button {
  width: 32px;
  padding-right: 4px;
}
.menubar {
  display: flex;
  gap: 11px;
  height: 19px;
  padding-left: 6px;
}

/* docks */
.workspace {
  display: flex;
  flex: 1;
  gap: 3px;
  padding-bottom: 2px;
}
.left {
  display: flex;
  flex-direction: column;
  gap: 3px;
  width: 197px;
}
.dock {
  display: flex;
  flex-direction: column;
  border: 1px solid #32353f;
  border-radius: 3px;
  background-color: #272a33;
}
.left .dock {
  flex: 1;
}
.dock h2 {
  display: flex;
  align-items: center;
  justify-content: space-between;
  height: 17px;
  padding: 0 3px 0 5px;
  background-color: #3c404d;
  font-size: 9px;
}
.list {
  flex: 1;
  padding: 2px 1px;
  list-style: none;
}
.list li {
  display: flex;
  align-items: center;
  gap: 6px;
  height: 21px;
  padding: 0 5px;
  border: 1px solid transparent;
  border-radius: 3px;
}
.list li span {
  flex: 1;
}
.list li > svg {
  margin-right: -3px;
}
.list .selected {
  border-color: #3f63cc;
  background-color: #284cb8;
}
.toolbar {
  display: flex;
  align-items: center;
  height: 23px;
  border-top: 1px solid #363944;
}
.toolbar button {
  min-width: 16px;
  height: 18px;
  margin: 0 2px;
}
.toolbar .mid {
  width: 25px;
  height: 22px;
  border: solid #363944;
  border-width: 0 1px;
}
.toolbar .dark {
  border-radius: 2px;
  background-color: #20222a;
}

/* preview */
.center {
  display: flex;
  flex: 1;
  flex-direction: column;
  min-width: 0;
}
.preview {
  display: flex;
  flex: 1 1 0;
  min-height: 0;
  margin: 1px 14px 0 3px;
  padding: 7px 0 5px;
  background-color: #10111a;
}
.shot {
  flex: 1;
  width: 100%;
  height: 100%;
  min-width: 0;
  fill: #f2f3f5;
}
.scale-text {
  fill: #b4b6bc;
  font-size: 6px;
  text-anchor: middle;
}
.zoombar {
  display: flex;
  align-items: center;
  height: 15px;
  padding-left: 6px;
  color: #9a9da5;
  font-size: 7px;
}
.zoombar span {
  width: 37px;
  text-align: center;
}
.pick {
  display: grid;
  align-items: center;
}
.pick select,
.pick svg {
  grid-area: 1 / 1;
}
.pick select {
  width: 100%;
  appearance: none;
}
.pick svg {
  justify-self: end;
  pointer-events: none;
}
.zoombar .pick {
  width: 78px;
  margin-left: 10px;
}
.context {
  display: flex;
  align-items: center;
  gap: 4px;
  height: 34px;
  margin: 0 0 2px 3px;
  padding-left: 4px;
  background-color: #272a33;
}
.context span {
  width: 138px;
}
.context button {
  gap: 2px;
  height: 22px;
  padding: 0 9px;
  border: 1px solid #3c404d;
  border-radius: 3px;
  color: #888b94;
}
.docks {
  display: flex;
  gap: 3px;
}

/* mixer */
.mixer {
  flex: 1;
}
.channels {
  display: flex;
  height: 142px;
  background-color: #1f2026;
}
.channel {
  display: flex;
  flex-direction: column;
  width: 52px;
  border-right: 1px solid #3c404d;
  background-color: #272a33;
}
.wide {
  width: 64px;
}
.channel b {
  height: 10px;
  background-color: #1c3185;
  font-size: 7px;
  line-height: 10px;
  text-align: center;
}
.active b {
  color: #6d88dd;
}
.name {
  justify-content: space-between;
  height: 15px;
  padding-left: 3px;
  font-size: 8px;
}
.db {
  padding-left: 5px;
  color: #888b94;
  font-size: 8px;
}
.levels {
  display: flex;
  justify-content: center;
  gap: 4px;
}
.fader {
  display: grid;
  width: 10px;
  height: 82px;
}
.fader svg,
.fader input {
  grid-area: 1 / 1;
  width: 10px;
  height: 82px;
}
.fader input {
  appearance: none;
  direction: rtl;
  writing-mode: vertical-lr;
}
.fader input::-webkit-slider-runnable-track {
  width: 8px;
  background: linear-gradient(#4269cf, #4269cf) center / 3px 100% no-repeat;
}
.fader input::-webkit-slider-thumb {
  width: 8px;
  height: 15px;
  border-radius: 3px;
  background-color: #fff;
  appearance: none;
}
.meter {
  width: 28px;
  height: 82px;
}
.mute {
  display: flex;
  flex: 1;
  align-items: center;
  justify-content: center;
  gap: 5px;
}
.toolbar .hidden-count {
  height: 22px;
  margin: 0 auto 0 0;
  padding: 0 8px;
  border-right: 1px solid #363944;
  color: #9a9da5;
  font-weight: 600;
}
.toolbar .sep {
  width: 25px;
  height: 22px;
  margin: 0;
  border-left: 1px solid #363944;
}
.toolbar .options {
  gap: 5px;
  width: 66px;
  font-weight: 700;
}

/* transitions */
.transitions {
  width: 130px;
}
.transitions .pick {
  height: 22px;
  margin: 4px 3px 3px;
  border-radius: 3px;
  background-color: #3c404d;
}
.transitions select {
  height: 22px;
  padding-left: 6px;
}
.transitions .pick svg {
  width: 17px;
  border-left: 1px solid #272a33;
}
.duration {
  display: flex;
  align-items: center;
  justify-content: space-between;
  padding: 0 3px;
}
.spin {
  display: flex;
  width: 82px;
  height: 22px;
  border-radius: 3px;
  background-color: #3c404d;
}
.spin input {
  flex: 1;
  min-width: 0;
  padding-left: 7px;
}
.steps {
  display: flex;
  flex-direction: column;
  width: 17px;
  border-left: 1px solid #272a33;
}
.steps button {
  flex: 1;
}
.actions {
  display: flex;
  justify-content: flex-end;
  gap: 4px;
  padding: 2px 4px;
}
.actions button {
  width: 17px;
  height: 19px;
  border-radius: 2px;
}
.actions .filled {
  background-color: #3c404d;
}

/* controls */
.controls {
  width: 150px;
}
.stack {
  display: flex;
  flex-direction: column;
  gap: 3px;
  padding: 4px 3px;
}
.stack button {
  position: relative;
  height: 22px;
  border: 1px solid #424654;
  border-radius: 3px;
  background-color: #3c404d;
}
.stack .hover {
  border-color: #596074;
  background-color: #464b5a;
}
.row {
  display: flex;
  gap: 3px;
}
.row button {
  flex: 1;
}
.row .square {
  flex: 0 0 22px;
}
.cursor {
  position: absolute;
  top: -6px;
  left: 42px;
  width: 10px;
  height: 14px;
}

/* status bar */
.status {
  display: flex;
  justify-content: flex-end;
  height: 21px;
  border-top: 1px solid #343741;
  background-color: #272a33;
}
.status span {
  display: flex;
  align-items: center;
  gap: 4px;
  padding: 0 4px;
  border-left: 1px solid #363944;
}
.status .dim {
  color: #74777f;
}
.status .fps {
  padding-right: 9px;
}

/* taskbar */
.taskbar {
  display: flex;
  align-items: stretch;
  height: 28px;
  background: linear-gradient(90deg, #16181e, #182532 55%, #1d2028);
}
.taskbar button svg {
  width: 18px;
  height: 18px;
}
.apps {
  display: flex;
  flex: none;
  width: 344px;
}
.apps button {
  flex: 1;
}
.apps .current {
  background: linear-gradient(#8ccbe8, #8ccbe8) bottom / 100% 2px no-repeat #464a54;
}
.apps .open {
  background: linear-gradient(#8ccbe8, #8ccbe8) bottom / 28px 2px no-repeat;
}
.links {
  margin: auto 34px auto auto;
  font-size: 8px;
}
.taskbar .weather {
  gap: 4px;
  font-size: 10px;
}
.tray {
  display: flex;
  align-items: center;
  gap: 5px;
  margin-left: 15px;
}
.clock {
  display: flex;
  flex-direction: column;
  justify-content: center;
  align-items: center;
  width: 50px;
  font-size: 8px;
  line-height: 12px;
}
.note {
  width: 28px;
  margin-right: 8px;
}
```
